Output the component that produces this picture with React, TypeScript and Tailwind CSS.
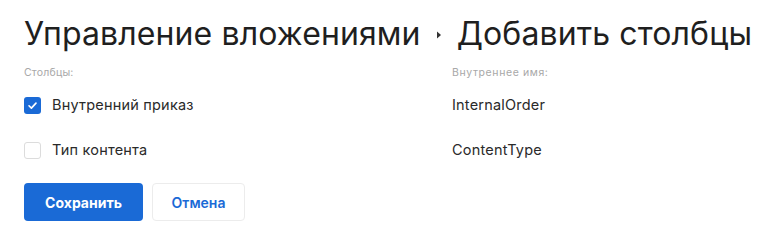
export default function App() {
  const rows = [
    { label: 'Внутренний приказ', name: 'InternalOrder', checked: true },
    { label: 'Тип контента', name: 'ContentType', checked: false },
  ];

  return (
    <div className="h-[235px] w-[763px] bg-white px-6 pt-[14px] font-['Inter',sans-serif] text-[#222]">
      {/* Breadcrumb title */}
      <h1 className="flex items-center whitespace-nowrap text-[32px] leading-[40px] font-normal tracking-[0.12px] text-[#1f1f1f]">
        <span>Управление вложениями</span>
        <svg className="mx-[15px] mt-[2px] h-[8px] w-[6px] shrink-0" viewBox="0 0 6 8">
          <path d="M1 0.5L5 4L1 7.5Z" fill="#333" />
        </svg>
        <span>Добавить столбцы</span>
      </h1>

      <div className="mt-[12px] grid grid-cols-[428px_1fr]">
        <div className="text-[10.5px] leading-[14px] tracking-[0.2px] text-[#a8a8a8]">Столбцы:</div>
        <div className="text-[10.5px] leading-[14px] tracking-[0.6px] text-[#a8a8a8]">Внутреннее имя:</div>

        {rows.map((row, i) => (
          <div key={row.name} className="contents">
            <label className={`flex items-center gap-[11px] ${i === 0 ? 'mt-[16px]' : 'mt-[27px]'}`}>
              {row.checked ? (
                <span className="flex h-[17px] w-[17px] items-center justify-center rounded-[3px] bg-[#1a6ad6]">
                  <svg className="h-[11px] w-[11px]" viewBox="0 0 12 12" fill="none">
                    <path d="M2.2 6.3L4.8 8.8L9.8 3.4" stroke="white" strokeWidth="1.8" strokeLinecap="round" strokeLinejoin="round" />
                  </svg>
                </span>
              ) : (
                <span className="h-[17px] w-[17px] rounded-[3px] border border-[#dcdcdc] bg-white" />
              )}
              <span className="text-[14.5px] leading-[18px] tracking-[0.2px] text-[#2a2a2a]">{row.label}</span>
            </label>
            <div className={`flex items-center text-[14.5px] leading-[18px] tracking-[0.2px] text-[#2a2a2a] ${i === 0 ? 'mt-[16px]' : 'mt-[27px]'}`}>
              {row.name}
            </div>
          </div>
        ))}
      </div>

      <div className="mt-[24px] flex gap-[9px]">
        <button className="h-[38px] w-[119px] rounded-[4px] bg-[#1a6ad6] text-[14px] font-bold text-white">
          Сохранить
        </button>
        <button className="h-[38px] w-[93px] rounded-[4px] border border-[#ececec] bg-white text-[14px] font-semibold text-[#1a6ad6]">
          Отмена
        </button>
      </div>
    </div>
  );
}
